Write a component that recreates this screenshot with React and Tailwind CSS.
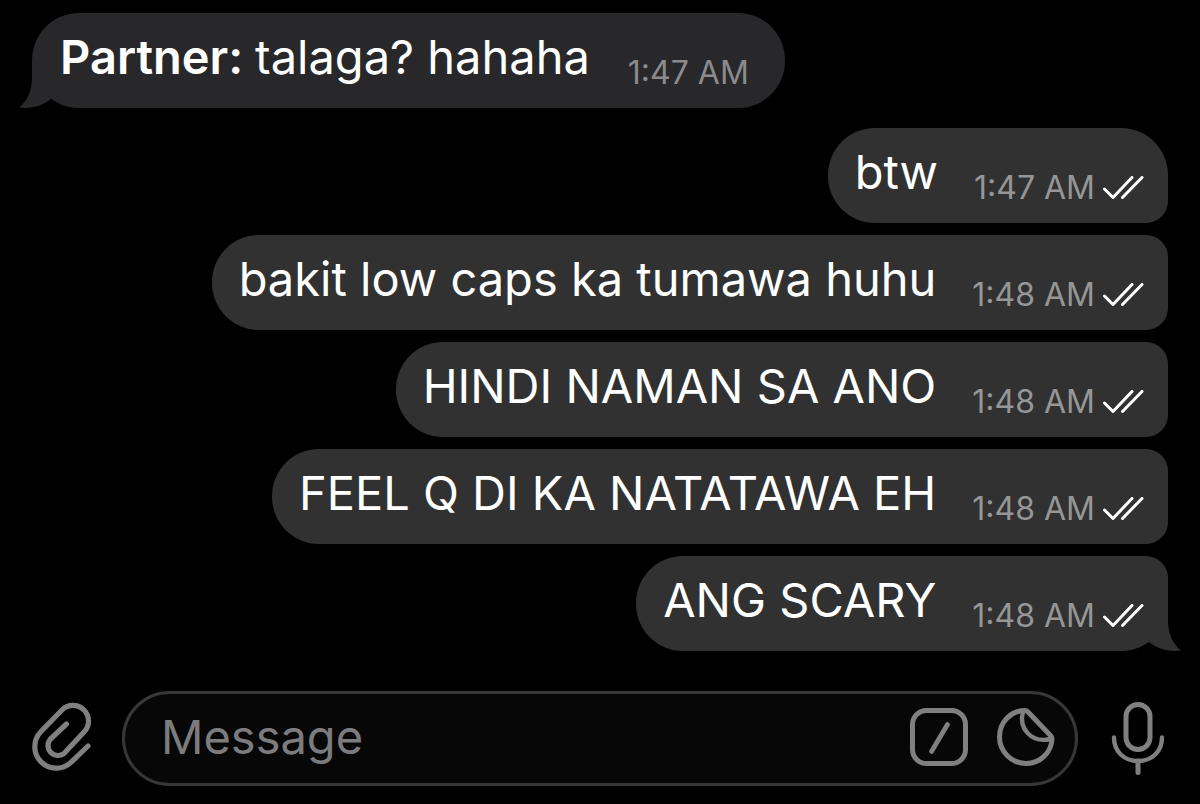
import { useState } from 'react';
import clsx from 'clsx';

const messages = [
  { id: 1, sender: 'Partner', text: 'talaga? hahaha', time: '1:47 AM', tail: true },
  { id: 2, text: 'btw', time: '1:47 AM', first: true },
  { id: 3, text: 'bakit low caps ka tumawa huhu', time: '1:48 AM' },
  { id: 4, text: 'HINDI NAMAN SA ANO', time: '1:48 AM' },
  { id: 5, text: 'FEEL Q DI KA NATATAWA EH', time: '1:48 AM' },
  { id: 6, text: 'ANG SCARY', time: '1:48 AM', tail: true }
];

const ReadTicks = () => (
  <svg className="w-[42px] h-6 ml-[7px]" viewBox="0 0 42 24" fill="none" stroke="currentColor" strokeWidth="3" strokeLinecap="round" strokeLinejoin="round" role="img" aria-label="Read">
    <path d="M2.5 13 L11 21.5 L30 1.5" />
    <path d="M20.5 21.5 L40 1.5" />
  </svg>
);

const Tail = ({ className }) => (
  <svg className={clsx('absolute bottom-0 w-12 h-12', className)} viewBox="0 0 48 48" fill="currentColor" aria-hidden="true">
    <path d="M13 0 V18 C13 31 8 41 0 47.5 C12 49 24 46 32 39 L44 30 L36 0 Z" />
  </svg>
);

const PaperclipIcon = () => (
  <svg className="w-16 h-[72px]" viewBox="30 701 64 72" fill="none" stroke="currentColor" strokeWidth="5.2" strokeLinecap="round" strokeLinejoin="round" aria-hidden="true">
    <path d="M88 746 L71.2 762.2 A21.5 21.5 0 0 1 40.8 731.8 L62 710 A15.5 15.5 0 0 1 84 732 L64 753.5 A10 10 0 0 1 50 739.5 L66.5 724" />
  </svg>
);

const CommandIcon = () => (
  <svg className="w-[60px] h-[60px]" viewBox="0 0 60 60" fill="none" stroke="currentColor" strokeWidth="5" strokeLinecap="round" aria-hidden="true">
    <rect x="3.5" y="3.5" width="53" height="53" rx="14" />
    <path d="M38.5 17.5 L22.5 44.5" strokeWidth="4.8" />
  </svg>
);

const StickerIcon = () => (
  <svg className="w-[60px] h-[60px]" viewBox="0 0 60 60" fill="none" stroke="currentColor" strokeWidth="5" strokeLinecap="round" strokeLinejoin="round" aria-hidden="true">
    <path d="M29 3.5 C14.5 3.5 3.5 15.5 3.5 30 C3.5 44.5 15.5 56.5 30 56.5 C44 56.5 55.5 45.5 56 32 C56 30.5 55.5 29.5 54.5 28.5 L32 5 C31 4 30 3.5 29 3.5 Z" />
    <path d="M27 4.5 C22.5 21 34.5 36.5 55 32" strokeWidth="4.4" />
  </svg>
);

const MicIcon = () => (
  <svg className="w-14 h-[76px]" viewBox="0 0 56 76" fill="none" stroke="currentColor" strokeWidth="5" strokeLinecap="round" aria-hidden="true">
    <rect x="16" y="5.5" width="24" height="45" rx="12" />
    <path d="M4 38.5 C4 52.5 14 62 28 62 C42 62 52 52.5 52 38.5" strokeWidth="4.4" />
    <path d="M28 62 V73.5" />
  </svg>
);

const MessageBubble = ({ message }) => {
  const { sender, text, time, first, tail } = message;
  const incoming = Boolean(sender);

  return (
    <li
      className={clsx(
        'relative flex items-end pt-4 pb-[23px]',
        incoming && 'self-start mb-2 gap-[38px] pl-7 pr-9 bg-[#28282a] rounded-[47px]',
        !incoming && 'self-end gap-9 pl-[27px] pr-6 bg-[#313131] rounded-l-[47px]',
        !incoming && (first ? 'rounded-tr-[47px]' : 'rounded-tr-[22px]'),
        !incoming && (tail ? 'rounded-br-[47px]' : 'rounded-br-[22px]')
      )}
    >
      {tail && (
        <Tail className={incoming ? '-left-[13px] text-[#28282a]' : '-right-[13px] -scale-x-100 text-[#313131]'} />
      )}
      <p className="relative text-[47px] leading-[56px] text-white">
        {sender && <strong className="font-semibold">{sender}: </strong>}
        {text}
      </p>
      <div className="relative flex items-end text-white">
        <time className={clsx('text-[32px] leading-6', incoming ? 'text-[#8b8b8d]' : 'text-[#969696]')}>{time}</time>
        {!incoming && <ReadTicks />}
      </div>
    </li>
  );
};

const App = () => {
  const [draft, setDraft] = useState('');

  return (
    <div className="min-h-screen flex flex-col bg-black font-['Inter',sans-serif]">
      {/* Conversation */}
      <main className="flex-1 px-8 pt-[13px] pb-10">
        <ul className="flex flex-col gap-3">
          {messages.map((message) => (
            <MessageBubble key={message.id} message={message} />
          ))}
        </ul>
      </main>

      {/* Composer */}
      <form
        className="flex items-center pl-[30px] pr-[34px] pb-[18px] text-[#808080]"
        onSubmit={(e) => e.preventDefault()}
      >
        <button type="button" aria-label="Attach file" className="pb-1">
          <PaperclipIcon />
        </button>
        <div className="flex-1 min-w-0 flex items-center gap-[27px] ml-7 mr-8 pl-9 pr-[19px] bg-[#070708] border-3 border-[#38383b] rounded-full">
          <input
            type="text"
            aria-label="Message"
            placeholder="Message"
            value={draft}
            onChange={(e) => setDraft(e.target.value)}
            className="flex-1 min-w-0 h-[89px] pb-1 bg-transparent text-[47px] text-white placeholder:text-[#7c7c7e] outline-none"
          />
          <button type="button" aria-label="Bot commands" className="pb-1">
            <CommandIcon />
          </button>
          <button type="button" aria-label="Stickers" className="pb-1">
            <StickerIcon />
          </button>
        </div>
        <button type="button" aria-label="Record voice message" className="pb-1">
          <MicIcon />
        </button>
      </form>
    </div>
  );
};

export default App;
